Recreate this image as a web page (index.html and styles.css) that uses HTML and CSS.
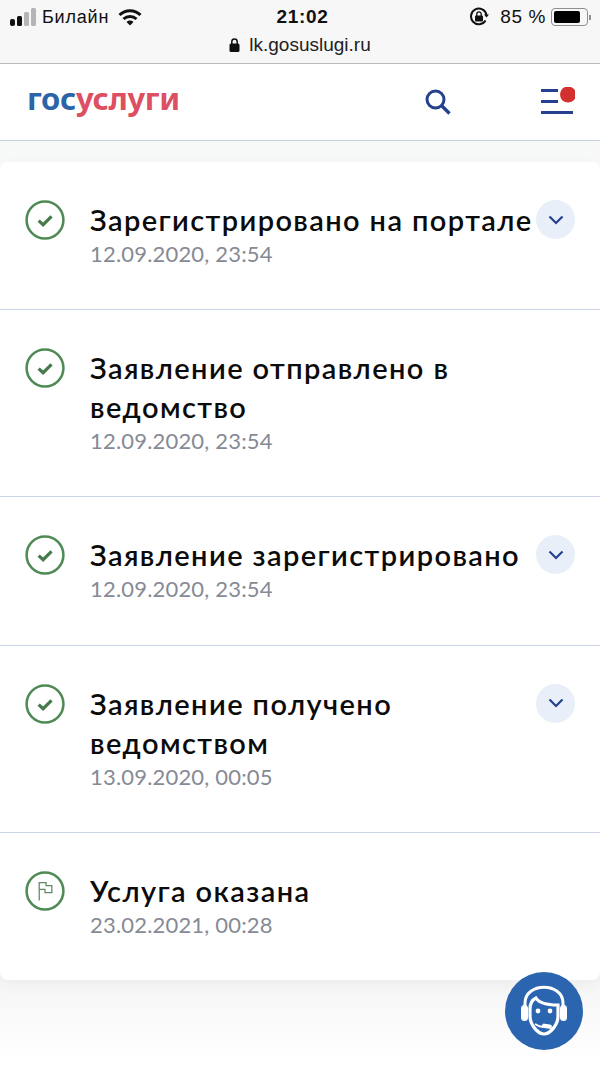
FILE: index.html
```html
<!DOCTYPE html>
<html lang="ru">
<head>
    <meta charset="UTF-8">
    <meta name="viewport" content="width=device-width, initial-scale=1.0">
    <title>Госуслуги</title>
    <link rel="stylesheet" href="styles.css">
</head>
<body>
    <div class="status-bar">
        <div class="status-row">
            <div class="status-left">
                <svg class="signal" width="27" height="18" viewBox="0 0 27 18">
                    <rect x="0" y="11" width="5" height="7" rx="2" fill="#111"/>
                    <rect x="7" y="8" width="5" height="10" rx="1.5" fill="#111"/>
                    <rect x="14" y="4" width="5" height="14" rx="1.5" fill="#b5b5b5"/>
                    <rect x="21" y="0" width="5" height="18" rx="1.5" fill="#b5b5b5"/>
                </svg>
                <span class="carrier">Билайн</span>
                <svg class="wifi" width="24" height="17" viewBox="0 0 24 17">
                    <path d="M1.5 6A15 15 0 0 1 22.5 6" fill="none" stroke="#111" stroke-width="3"/>
                    <path d="M5.5 10A9.500 9.500 0 0 1 18.500 10" fill="none" stroke="#111" stroke-width="3"/>
                    <path d="M12 16.500L8.500 13A5 5 0 0 1 15.500 13Z" fill="#111"/>
                </svg>
            </div>
            <div class="clock">21:02</div>
            <div class="status-right">
                <svg class="rotation" width="20" height="20" viewBox="0 0 20 20">
                    <path d="M16.500 13.500A7.800 7.800 0 1 1 17.500 8" fill="none" stroke="#111" stroke-width="2"/>
                    <path d="M15 7.500h5l-2.500 3z" fill="#111"/>
                    <rect x="6" y="8.500" width="8" height="6" rx="1" fill="#111"/>
                    <path d="M7.800 9V7a2.200 2.200 0 0 1 4.400 0v2" fill="none" stroke="#111" stroke-width="1.300"/>
                </svg>
                <span class="percent">85 %</span>
                <div class="battery"><div class="battery-level"></div></div>
                <div class="battery-cap"></div>
            </div>
        </div>
        <div class="address">
            <svg width="11" height="14" viewBox="0 0 11 14">
                <rect x="0.500" y="5.500" width="10" height="8.500" rx="1.500" fill="#111"/>
                <path d="M2.800 6V3.800a2.700 2.700 0 0 1 5.400 0V6" fill="none" stroke="#111" stroke-width="1.500"/>
            </svg>
            <span>lk.gosuslugi.ru</span>
        </div>
    </div>

    <header class="site-header">
        <div class="logo"><span class="logo-blue">гос</span><span class="logo-red">услуги</span></div>
        <div class="header-icons">
            <svg class="search-icon" width="26" height="26" viewBox="0 0 26 26">
                <circle cx="10.500" cy="10.500" r="8.500" fill="none" stroke="#24408e" stroke-width="3"/>
                <path d="M16.500 16.500L24.500 24.500" stroke="#24408e" stroke-width="3.400"/>
            </svg>
            <div class="burger">
                <svg width="34" height="28" viewBox="0 0 34 28">
                    <rect x="0" y="2" width="17" height="3" fill="#24408e"/>
                    <rect x="0" y="13" width="17" height="3" fill="#24408e"/>
                    <rect x="0" y="24" width="32" height="3" fill="#24408e"/>
                    <circle cx="27" cy="7.500" r="8" fill="#d3302f"/>
                </svg>
            </div>
        </div>
    </header>

    <main class="page">
        <div class="card">
            <div class="step">
                <svg class="step-icon" viewBox="0 0 38 38">
                    <circle cx="19" cy="19" r="17.500" fill="none" stroke="#4f8a55" stroke-width="2.400"/>
                    <path d="M13 19.500l4.200 4 8-8" fill="none" stroke="#457a4b" stroke-width="3"/>
                </svg>
                <div class="step-text">
                    <div class="step-title">Зарегистрировано на портале</div>
                    <div class="step-date">12.09.2020, 23:54</div>
                </div>
                <div class="toggle"><svg width="16" height="10" viewBox="0 0 16 10"><path d="M1.500 1.500L8 8l6.500-6.500" fill="none" stroke="#24408e" stroke-width="2.200"/></svg></div>
            </div>
            <div class="step">
                <svg class="step-icon" viewBox="0 0 38 38">
                    <circle cx="19" cy="19" r="17.500" fill="none" stroke="#4f8a55" stroke-width="2.400"/>
                    <path d="M13 19.500l4.200 4 8-8" fill="none" stroke="#457a4b" stroke-width="3"/>
                </svg>
                <div class="step-text">
                    <div class="step-title">Заявление отправлено в<br>ведомство</div>
                    <div class="step-date">12.09.2020, 23:54</div>
                </div>
            </div>
            <div class="step">
                <svg class="step-icon" viewBox="0 0 38 38">
                    <circle cx="19" cy="19" r="17.500" fill="none" stroke="#4f8a55" stroke-width="2.400"/>
                    <path d="M13 19.500l4.200 4 8-8" fill="none" stroke="#457a4b" stroke-width="3"/>
                </svg>
                <div class="step-text">
                    <div class="step-title">Заявление зарегистрировано</div>
                    <div class="step-date">12.09.2020, 23:54</div>
                </div>
                <div class="toggle"><svg width="16" height="10" viewBox="0 0 16 10"><path d="M1.500 1.500L8 8l6.500-6.500" fill="none" stroke="#24408e" stroke-width="2.200"/></svg></div>
            </div>
            <div class="step">
                <svg class="step-icon" viewBox="0 0 38 38">
                    <circle cx="19" cy="19" r="17.500" fill="none" stroke="#4f8a55" stroke-width="2.400"/>
                    <path d="M13 19.500l4.200 4 8-8" fill="none" stroke="#457a4b" stroke-width="3"/>
                </svg>
                <div class="step-text">
                    <div class="step-title">Заявление получено<br>ведомством</div>
                    <div class="step-date">13.09.2020, 00:05</div>
                </div>
                <div class="toggle"><svg width="16" height="10" viewBox="0 0 16 10"><path d="M1.500 1.500L8 8l6.500-6.500" fill="none" stroke="#24408e" stroke-width="2.200"/></svg></div>
            </div>
            <div class="step">
                <svg class="step-icon" viewBox="0 0 38 38">
                    <circle cx="19" cy="19" r="17.500" fill="none" stroke="#4f8a55" stroke-width="2.400"/>
                    <path d="M13.500 28V11h6.500v3h5.500v6.500h-6.500v-3h-5.500" fill="none" stroke="#5f8a64" stroke-width="1.200"/>
                </svg>
                <div class="step-text">
                    <div class="step-title">Услуга оказана</div>
                    <div class="step-date">23.02.2021, 00:28</div>
                </div>
            </div>
        </div>
    </main>

    <div class="support">
        <svg width="78" height="78" viewBox="0 0 78 78">
            <circle cx="39" cy="39" r="39" fill="#2b65b0"/>
            <path d="M20 36V31C20 10 58 10 58 31v5" fill="none" stroke="#fff" stroke-width="3"/>
            <rect x="16" y="33" width="7" height="16" rx="3.500" fill="#fff"/>
            <rect x="55" y="33" width="7" height="16" rx="3.500" fill="#fff"/>
            <path d="M25 37c0-5 2-9 6-11 3 5 11 7 22 7v11c0 9-8 18-14 18s-14-9-14-18z" fill="none" stroke="#fff" stroke-width="3.200"/>
            <circle cx="33" cy="39" r="2.400" fill="#fff"/>
            <circle cx="45" cy="39" r="2.400" fill="#fff"/>
            <path d="M30 52c3 2 5 3 8 3" fill="none" stroke="#fff" stroke-width="2"/>
            <rect x="37" y="52" width="10" height="4.500" rx="2.200" fill="#fff" transform="rotate(8 42 54)"/>
        </svg>
    </div>
</body>
</html>
```

FILE: styles.css
```css
html, body {
    margin: 0;
    padding: 0;
}
body {
    width: 600px;
    height: 1066px;
    overflow: hidden;
    position: relative;
    font-family: "Lato", "Noto Sans", sans-serif;
    background: linear-gradient(#f8f9f9 0, #f5f5f5 980px, #ffffff 1060px);
}
.status-bar {
    height: 63px;
    background-color: #f7f7f7;
    border-bottom: 1px solid #b9bcc0;
    font-family: "Liberation Sans", Arial, sans-serif;
    color: #111;
}
.status-row {
    height: 32px;
    padding: 1px 9px 0 10px;
    display: grid;
    grid-template-columns: 1fr auto 1fr;
    align-items: center;
}
.status-left, .status-right {
    display: flex;
    align-items: center;
}
.status-right {
    justify-content: flex-end;
}
.carrier {
    font-size: 18px;
    margin-left: 5px;
    letter-spacing: 0.8px;
}
.wifi {
    margin-left: 9px;
}
.clock {
    font-size: 19px;
    font-weight: bold;
    letter-spacing: 0.7px;
    margin-left: 4px;
}
.rotation {
    margin-right: 1px;
}
.percent {
    font-size: 19px;
    margin-left: 10px;
    letter-spacing: 0.6px;
}
.battery {
    width: 37px;
    height: 18px;
    margin-left: 5px;
    padding: 2px;
    box-sizing: border-box;
    border: 1px solid #8f8f8f;
    border-radius: 4px;
}
.battery-level {
    width: 85%;
    height: 100%;
    background-color: #000;
    border-radius: 2px;
}
.battery-cap {
    width: 2px;
    height: 5px;
    margin-left: 1px;
    background-color: #8f8f8f;
}
.address {
    display: flex;
    align-items: center;
    justify-content: center;
    gap: 9px;
    font-size: 19px;
    color: #222;
    height: 22px;
    margin-top: 1px;
}
.site-header {
    height: 76px;
    background-color: #fff;
    border-bottom: 1px solid #c3d0e0;
    padding: 0 25px 0 27px;
    display: flex;
    align-items: center;
    justify-content: space-between;
}
.logo {
    font-family: "Noto Sans", sans-serif;
    font-size: 31px;
    font-weight: bold;
    letter-spacing: -0.3px;
    line-height: 1;
    margin-top: -8px;
}
.logo-blue {
    color: #2b65a8;
}
.logo-red {
    color: #dd4f62;
}
.header-icons {
    display: flex;
    align-items: center;
    gap: 90px;
}
.search-icon {
    display: block;
}
.burger {
    margin-top: -2px;
}
.burger svg {
    display: block;
}
.page {
    padding-top: 21px;
}
.card {
    background-color: #fff;
    border-radius: 8px;
    box-shadow: 0 4px 16px rgba(0, 0, 0, 0.04);
}
.step {
    display: flex;
    align-items: flex-start;
    padding: 38px 25px 40.2px 25px;
    border-bottom: 1px solid #c9d5e6;
}
.step:last-child {
    border-bottom: none;
}
.step-icon {
    width: 40px;
    height: 40px;
    flex: none;
    margin-right: 25px;
}
.step-text {
    flex: 1;
}
.step-title {
    font-size: 29px;
    font-weight: 600;
    line-height: 39px;
    letter-spacing: 1.4px;
    color: #0b0b0b;
}
.step-date {
    font-size: 22px;
    line-height: 30px;
    letter-spacing: 0.18px;
    color: #868a94;
}
.toggle {
    position: absolute;
    right: 25px;
    width: 39px;
    height: 39px;
    border-radius: 50%;
    background-color: #e8eff8;
    display: flex;
    align-items: center;
    justify-content: center;
}
.support {
    position: absolute;
    left: 505px;
    top: 972px;
    width: 78px;
    height: 78px;
}
```
